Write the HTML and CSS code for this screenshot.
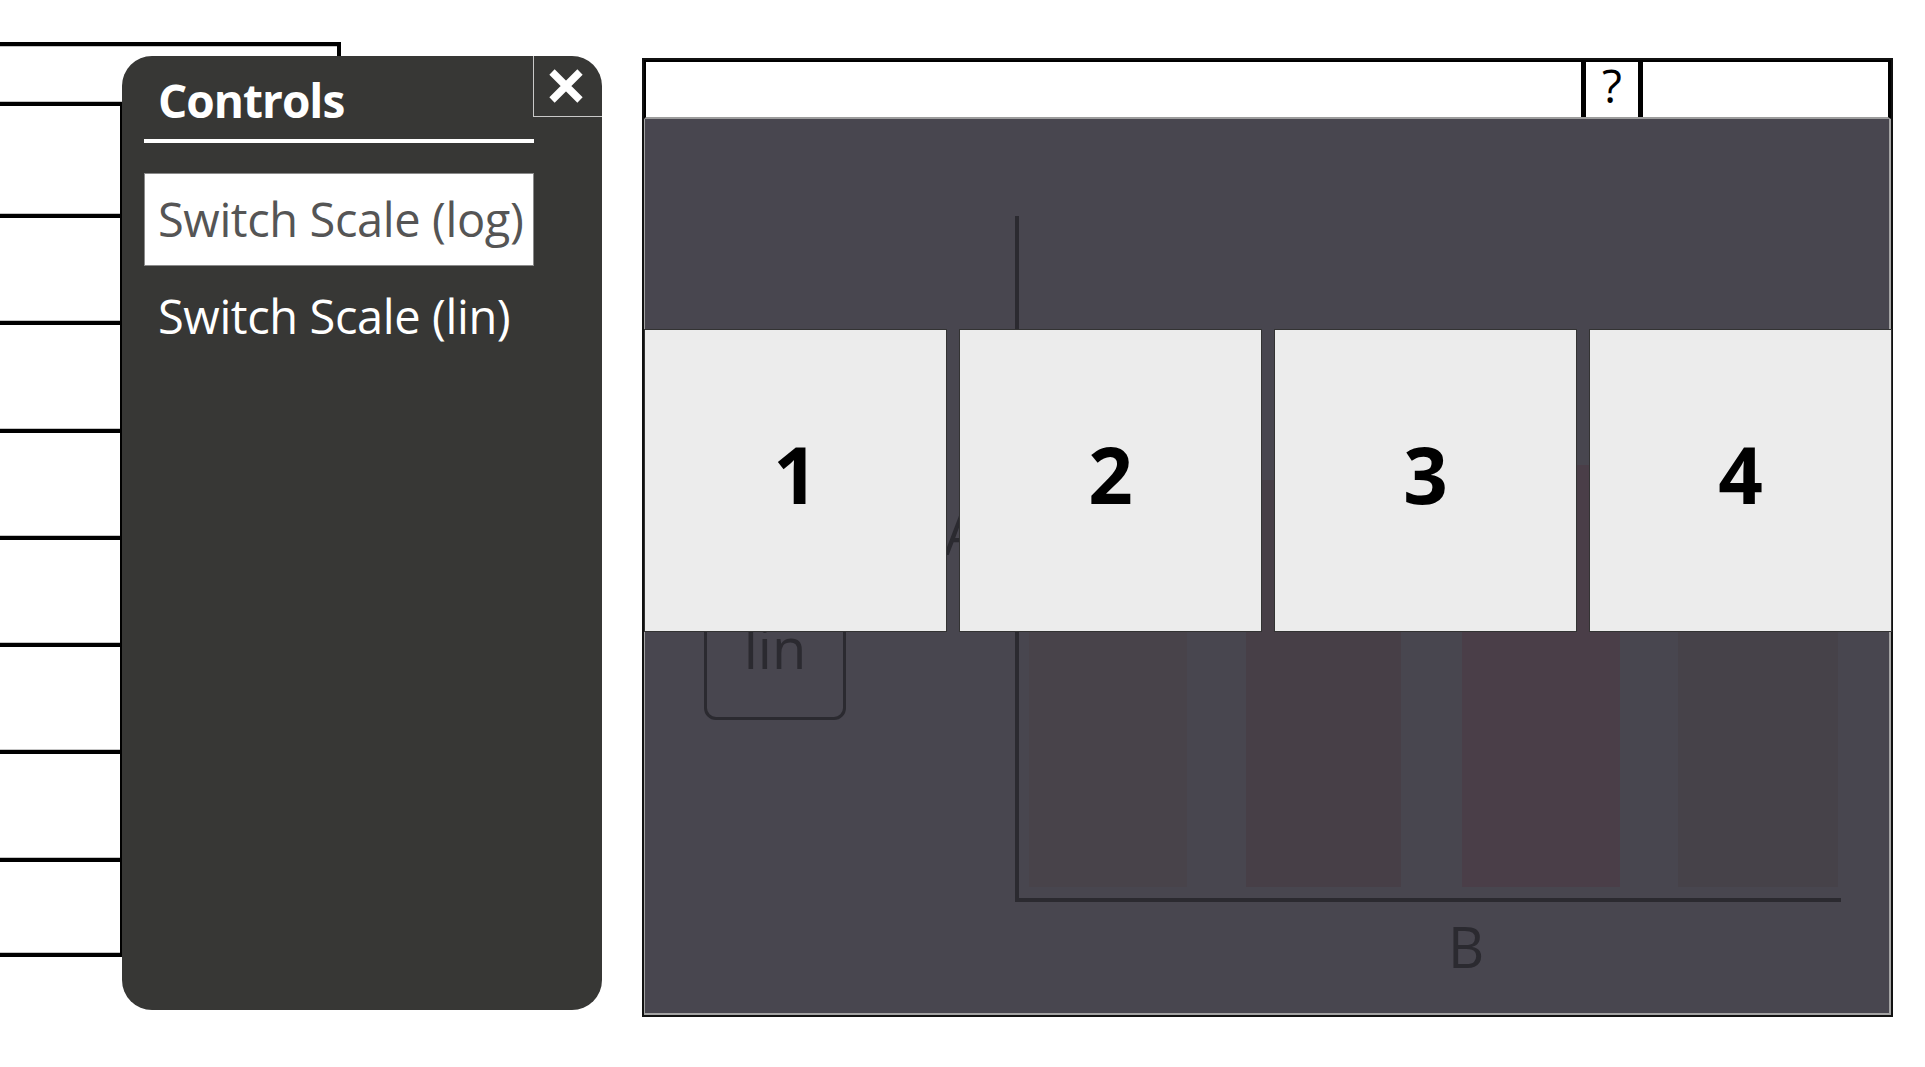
FILE: index.html
```html
<!DOCTYPE html>
<html lang="en">
<head>
<meta charset="utf-8">
<title>Controls</title>
<link rel="stylesheet" href="styles.css">
</head>
<body>
<div class="page">
  <div class="list">
    <div class="list-head"></div>
    <div class="list-row"></div>
    <div class="list-row"></div>
    <div class="list-row"></div>
    <div class="list-row"></div>
    <div class="list-row"></div>
    <div class="list-row"></div>
    <div class="list-row"></div>
    <div class="list-row"></div>
  </div>

  <section class="chart-box">
    <header class="chart-header">
      <div class="hd-main"></div>
      <div class="hd-help">?</div>
      <div class="hd-side"></div>
    </header>
    <div class="chart-body"></div>

    <div class="axis axis-y"></div>
    <div class="axis axis-x"></div>
    <div class="bar bar-1"></div>
    <div class="bar bar-2"></div>
    <div class="bar bar-3"></div>
    <div class="bar bar-4"></div>
    <span class="axis-label label-a">A</span>
    <span class="axis-label label-b">B</span>
    <div class="scale-btn">lin</div>

    <div class="cards">
      <div class="card">1</div>
      <div class="card">2</div>
      <div class="card">3</div>
      <div class="card">4</div>
    </div>
  </section>

  <aside class="panel">
    <button class="close-btn" aria-label="Close">
      <svg width="36" height="36" viewBox="0 0 36 36"><path d="M4 4 L32 32 M32 4 L4 32" stroke="#ffffff" stroke-width="7.5" fill="none"/></svg>
    </button>
    <h2 class="panel-title">Controls</h2>
    <div class="panel-items">
      <div class="panel-item active">Switch Scale (log)</div>
      <div class="panel-item">Switch Scale (lin)</div>
    </div>
  </aside>
</div>
</body>
</html>
```

FILE: styles.css
```css
* { box-sizing: border-box; }

html, body {
  margin: 0;
  padding: 0;
  background: #ffffff;
  font-family: "Open Sans", "Noto Sans", sans-serif;
}

.page {
  position: relative;
  width: 1925px;
  height: 1067px;
  overflow: hidden;
  display: flex;
  align-items: flex-start;
}

/* left list behind the panel */
.list {
  flex: 0 0 341px;
  margin-top: 42px;
  display: flex;
  flex-direction: column;
}
.list-head {
  width: 341px;
  height: 64px;
  border-top: 4px solid #000;
  border-right: 4px solid #000;
  border-bottom: 4px solid #000;
  box-shadow: inset 0 -1px 0 #c4c4c4, inset 0 1px 0 #c4c4c4;
}
.list-row {
  width: 122px;
  height: 107.3px;
  border-right: 2px solid #000;
  border-bottom: 4px solid #000;
  box-shadow: inset 0 -1px 0 #c4c4c4;
}
.list-head + .list-row { height: 112px; }
.list-row:last-child { height: 95px; }

/* chart */
.chart-box {
  position: relative;
  margin-left: 301px;
  margin-top: 58px;
  width: 1251px;
  height: 959px;
  border: 2px solid #111;
  display: flex;
  flex-direction: column;
}
.chart-header {
  height: 59px;
  display: flex;
  background: #fff;
  border-top: 2px solid #000;
  border-left: 2px solid #000;
  border-right: 3px solid #000;
  border-bottom: 2px solid #9c9c9c;
}
.hd-main { flex: 1; }
.hd-help {
  width: 62px;
  border-left: 5px solid #000;
  border-right: 5px solid #000;
  text-align: center;
  font-size: 46px;
  line-height: 46px;
  color: #000;
}
.hd-side { width: 245px; }

.chart-body {
  flex: 1;
  background: #48464f;
  border-style: solid;
  border-color: #a3a3a3;
  border-width: 0 2px 2px 1px;
}

.axis {
  position: absolute;
  background: #2b2a30;
}
.axis-y { left: 371px; top: 156px; width: 4px; height: 686px; }
.axis-x { left: 371px; top: 838px; width: 826px; height: 4px; }

.bar { position: absolute; bottom: 128px; }
.bar-1 { left: 385px; width: 158px; top: 360px; background: #48434a; }
.bar-2 { left: 602px; width: 155px; top: 420px; background: #473f47; }
.bar-3 { left: 818px; width: 158px; top: 405px; background: #4a3e48; }
.bar-4 { left: 1034px; width: 160px; top: 380px; background: #464249; }

.axis-label {
  position: absolute;
  font-size: 56px;
  line-height: 56px;
  color: #2b2a30;
}
.label-a { left: 300px; top: 445px; }
.label-b { left: 804px; top: 858px; }

.scale-btn {
  position: absolute;
  left: 60px;
  top: 540px;
  width: 142px;
  height: 120px;
  border: 3px solid #2b2a30;
  border-radius: 12px;
  padding-top: 16px;
  text-align: center;
  font-size: 56px;
  line-height: 56px;
  color: #2b2a30;
}

.cards {
  position: absolute;
  left: 0;
  right: -1px;
  top: 269px;
  height: 303px;
  display: flex;
  gap: 12px;
}
.card {
  flex: 1;
  background: #ececec;
  border: 1px solid #333;
  display: flex;
  align-items: center;
  justify-content: center;
  padding-bottom: 14px;
  font-size: 78px;
  font-weight: 700;
  color: #000;
}

/* controls panel */
.panel {
  position: absolute;
  left: 122px;
  top: 56px;
  width: 480px;
  height: 954px;
  background: #373735;
  border-radius: 30px;
  overflow: hidden;
  padding-top: 14px;
}
.close-btn {
  position: absolute;
  top: 0;
  right: 0;
  width: 69px;
  height: 61px;
  margin: 0;
  padding: 0 4px 0 0;
  background: transparent;
  border: 0;
  border-left: 1px solid #c8c8c8;
  border-bottom: 1px solid #c8c8c8;
  display: flex;
  align-items: center;
  justify-content: center;
}
.panel-title {
  margin: 0 68px 0 22px;
  padding: 0 0 9px 14px;
  border-bottom: 4px solid #fff;
  font-size: 46px;
  line-height: 60px;
  font-weight: 700;
  letter-spacing: -1px;
  color: #fff;
}
.panel-items {
  margin: 30px 68px 0 22px;
  display: flex;
  flex-direction: column;
  gap: 4px;
}
.panel-item {
  height: 93px;
  padding-left: 13px;
  border: 1px solid transparent;
  font-size: 47px;
  line-height: 91px;
  letter-spacing: -0.4px;
  color: #fff;
  white-space: nowrap;
}
.panel-item.active {
  background: #fff;
  border-color: #8a8a8a;
  color: #555;
}
```
